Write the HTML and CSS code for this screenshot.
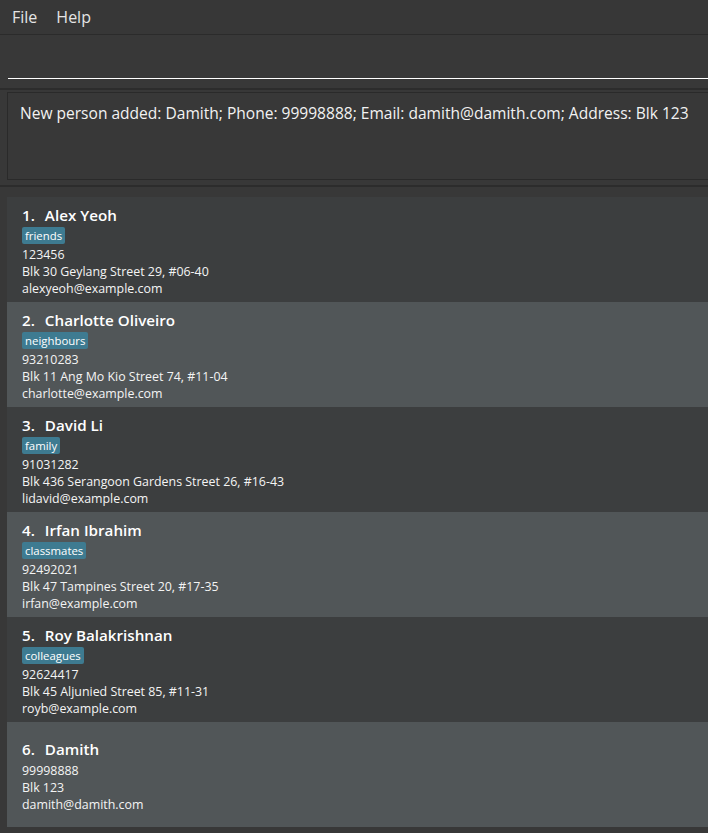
FILE: index.html
```html
<!DOCTYPE html>
<html>
<head>
<meta charset="utf-8">
<link rel="stylesheet" href="styles.css">
</head>
<body>
<div class="app">
  <div class="menubar">
    <span class="menu">File</span>
    <span class="menu">Help</span>
  </div>
  <div class="command">
    <div class="command-input"></div>
  </div>
  <div class="divider"></div>
  <div class="result-pane">
    <div class="result-box">New person added: Damith; Phone: 99998888; Email: damith@damith.com; Address: Blk 123</div>
  </div>
  <div class="divider"></div>
  <div class="list">
    <div class="card odd">
      <div class="name"><span class="idx">1.</span>Alex Yeoh</div>
      <div class="tags"><span class="tag">friends</span></div>
      <div class="field">123456</div>
      <div class="field">Blk 30 Geylang Street 29, #06-40</div>
      <div class="field">alexyeoh@example.com</div>
    </div>
    <div class="card even">
      <div class="name"><span class="idx">2.</span>Charlotte Oliveiro</div>
      <div class="tags"><span class="tag">neighbours</span></div>
      <div class="field">93210283</div>
      <div class="field">Blk 11 Ang Mo Kio Street 74, #11-04</div>
      <div class="field">charlotte@example.com</div>
    </div>
    <div class="card odd">
      <div class="name"><span class="idx">3.</span>David Li</div>
      <div class="tags"><span class="tag">family</span></div>
      <div class="field">91031282</div>
      <div class="field">Blk 436 Serangoon Gardens Street 26, #16-43</div>
      <div class="field">lidavid@example.com</div>
    </div>
    <div class="card even">
      <div class="name"><span class="idx">4.</span>Irfan Ibrahim</div>
      <div class="tags"><span class="tag">classmates</span></div>
      <div class="field">92492021</div>
      <div class="field">Blk 47 Tampines Street 20, #17-35</div>
      <div class="field">irfan@example.com</div>
    </div>
    <div class="card odd">
      <div class="name"><span class="idx">5.</span>Roy Balakrishnan</div>
      <div class="tags"><span class="tag">colleagues</span></div>
      <div class="field">92624417</div>
      <div class="field">Blk 45 Aljunied Street 85, #11-31</div>
      <div class="field">royb@example.com</div>
    </div>
    <div class="card even">
      <div class="name"><span class="idx">6.</span>Damith</div>
      <div class="tags"></div>
      <div class="field">99998888</div>
      <div class="field">Blk 123</div>
      <div class="field">damith@damith.com</div>
    </div>
  </div>
</div>
</body>
</html>
```

FILE: styles.css
```css
html, body {
  margin: 0;
  padding: 0;
  background: #383838;
  font-family: "Open Sans", "Noto Sans", sans-serif;
  color: #ffffff;
}

.app {
  width: 708px;
  height: 833px;
  overflow: hidden;
  display: flex;
  flex-direction: column;
}

.menubar {
  height: 34px;
  border-bottom: 1px solid #2b2b2b;
  background: #373737;
  display: flex;
  align-items: center;
  padding-left: 12px;
  gap: 19px;
  box-sizing: content-box;
}

.menu {
  font-size: 16px;
  color: #e4e4e4;
  line-height: 34px;
}

.command {
  height: 53px;
  display: flex;
  align-items: flex-start;
}

.command-input {
  margin-top: 43px;
  margin-left: 8px;
  flex: 1;
  border-bottom: 1px solid #ffffff;
}

.divider {
  height: 2px;
  background: #2c2c2c;
}

.result-pane {
  padding: 2px 0 5px 7px;
}

.result-box {
  border: 1px solid #2a2a2a;
  border-right: none;
  padding: 9px 0 0 12px;
  box-sizing: border-box;
  height: 88px;
  font-size: 15.55px;
  color: #f2f2f2;
  white-space: nowrap;
}

.list {
  padding: 10px 0 0 7px;
  display: flex;
  flex-direction: column;
}

.card {
  height: 105px;
  display: flex;
  flex-direction: column;
  justify-content: center;
  padding: 2px 0 0 15px;
  box-sizing: border-box;
}

.card.odd { background: #3c3e3f; }
.card.even { background: #515658; }

.name {
  font-size: 15.2px;
  font-weight: 600;
  color: #ffffff;
  line-height: 22px;
}

.idx {
  display: inline-block;
  margin-right: 10px;
}

.tags {
  display: flex;
  padding: 1px 0;
}

.tag {
  display: inline-block;
  height: 17px;
  background: #3e7b91;
  color: #ffffff;
  font-size: 11.4px;
  line-height: 17px;
  padding: 0 3px;
  border-radius: 2px;
  margin-bottom: 1px;
}

.field {
  font-size: 12.4px;
  line-height: 17px;
  color: #f4f4f4;
}
```
